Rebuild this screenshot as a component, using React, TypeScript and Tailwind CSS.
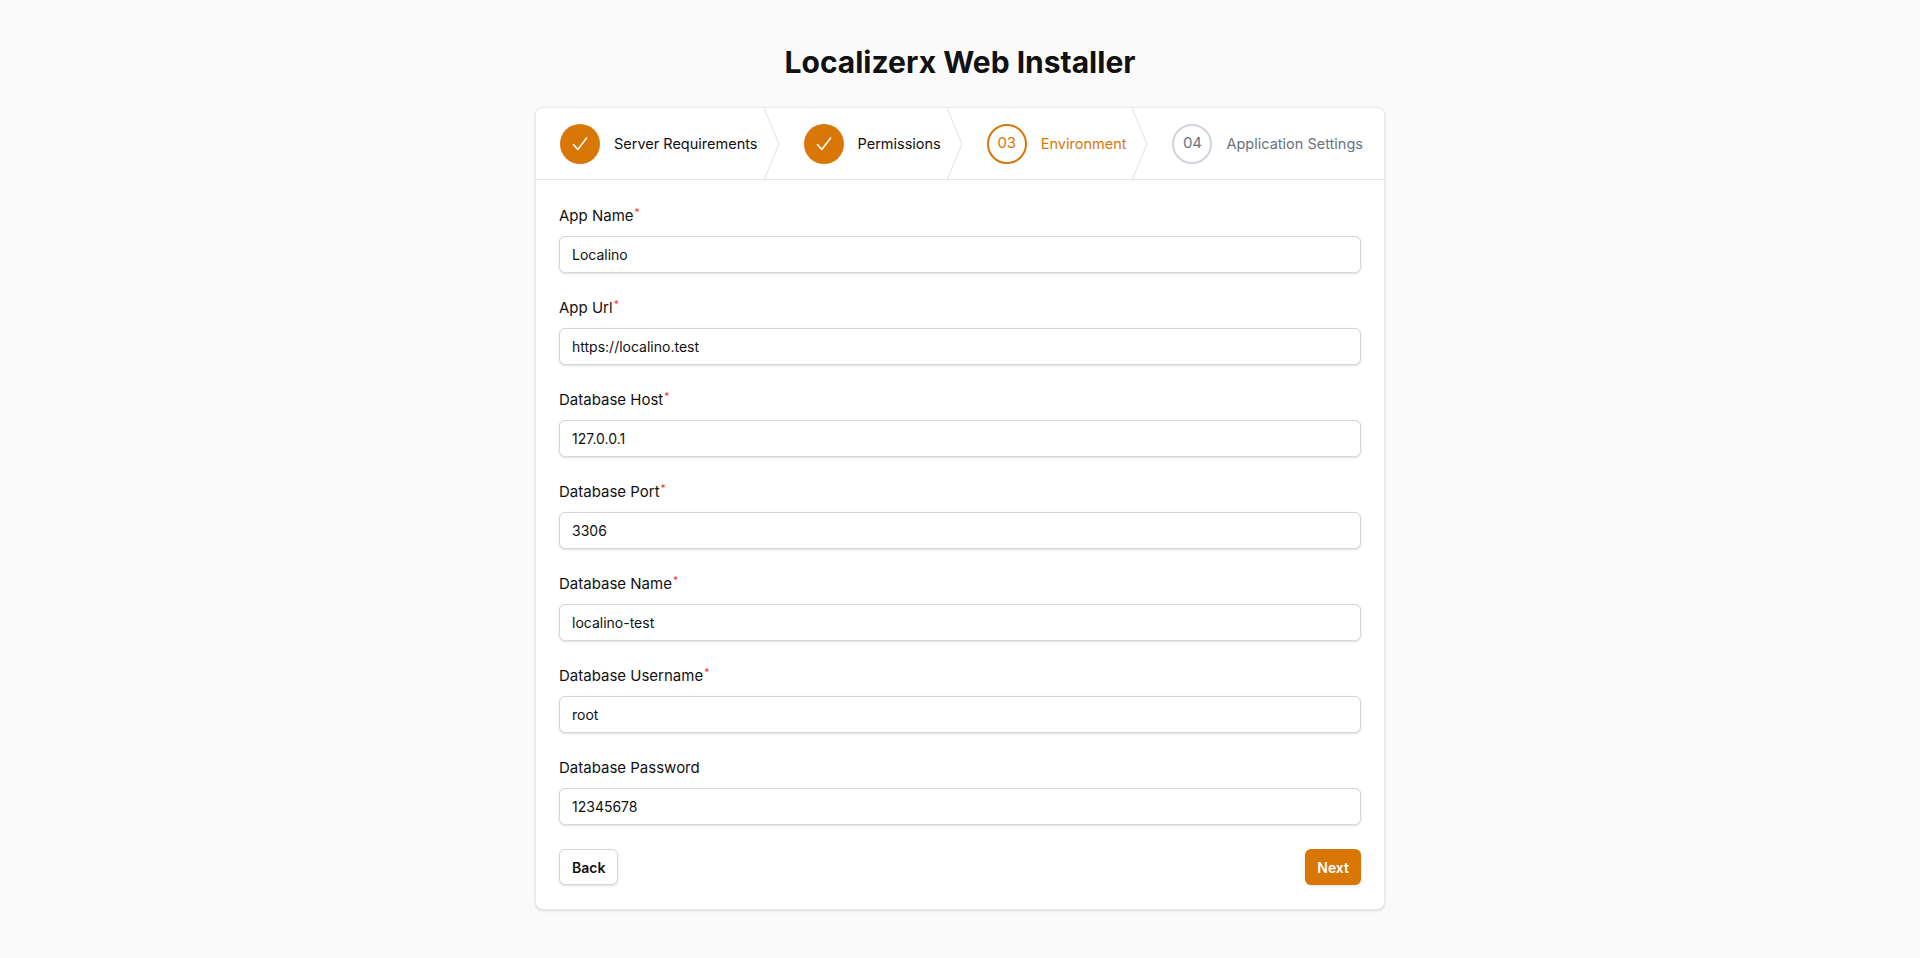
import React from "react";

const STEPS = [
  { label: "Server Requirements", state: "done", n: "01" },
  { label: "Permissions", state: "done", n: "02" },
  { label: "Environment", state: "active", n: "03" },
  { label: "Application Settings", state: "todo", n: "04" },
];

const FIELDS = [
  { label: "App Name", value: "Localino", req: true },
  { label: "App Url", value: "https://localino.test", req: true },
  { label: "Database Host", value: "127.0.0.1", req: true },
  { label: "Database Port", value: "3306", req: true },
  { label: "Database Name", value: "localino-test", req: true },
  { label: "Database Username", value: "root", req: true },
  { label: "Database Password", value: "12345678", req: false },
];

function Chevron() {
  return (
    <svg className="h-[72px] w-[16px] shrink-0" viewBox="0 0 16 72" preserveAspectRatio="none">
      <path d="M0 0 L15 36 L0 72" fill="none" stroke="#e5e7eb" strokeWidth="1.2" />
    </svg>
  );
}

export default function App() {
  return (
    <div className="min-h-[958px] bg-[#fafafa] flex flex-col items-center" style={{ fontFamily: "Inter, 'Noto Sans', sans-serif" }}>
      <h1 className="mt-[43px] text-[30px] leading-[38px] font-bold text-[#111]">Localizerx Web Installer</h1>
      <div className="mt-[26px] w-[850px] rounded-lg border border-gray-200 bg-white shadow-sm">
        <div className="flex h-[72px] items-stretch border-b border-gray-200">
          {STEPS.map((s, i) => (
            <div key={s.label} className="flex items-stretch">
              <div className={`flex items-center gap-[14px] whitespace-nowrap ${i === 0 ? "pl-[24px] pr-[6px]" : "pl-[24px] pr-[6px]"}`}>
                {s.state === "done" ? (
                  <span className="flex h-10 w-10 shrink-0 items-center justify-center rounded-full bg-[#d97706]">
                    <svg width="22" height="22" viewBox="0 0 20 20" fill="none" stroke="white" strokeWidth="1.4" strokeLinecap="round" strokeLinejoin="round">
                      <path d="M4 10.5 L8 15 L16 4.5" />
                    </svg>
                  </span>
                ) : s.state === "active" ? (
                  <span className="flex h-10 w-10 shrink-0 items-center justify-center rounded-full border-2 border-[#d97706] text-[15px] text-[#d97706]">{s.n}</span>
                ) : (
                  <span className="flex h-10 w-10 shrink-0 items-center justify-center rounded-full border-2 border-gray-300 text-[15px] text-gray-500">{s.n}</span>
                )}
                <span className={`text-[14.5px] ${s.state === "active" ? "text-[#d97706]" : s.state === "todo" ? "text-gray-500" : "text-[#111]"}`}>{s.label}</span>
              </div>
              {i < STEPS.length - 1 && <Chevron />}
            </div>
          ))}
        </div>
        <div className="px-[23px] pt-[26px] pb-[24px]">
          {FIELDS.map((f) => (
            <div key={f.label} className="mb-[25px]">
              <label className="mb-[10px] block text-[15px] leading-[20px] text-[#111]">
                {f.label}
                {f.req && <sup className="ml-[1px] text-[10px] text-red-500">*</sup>}
              </label>
              <input
                readOnly
                value={f.value}
                className="h-[37px] w-full rounded-md border border-gray-300 bg-white px-3 text-[14px] text-[#111] shadow-sm outline-none"
              />
            </div>
          ))}
          <div className="-mt-px flex justify-between">
            <button className="h-9 rounded-md border border-gray-300 bg-white px-3 text-[14px] font-semibold text-[#111] shadow-sm">Back</button>
            <button className="h-9 rounded-md bg-[#d97706] px-3 text-[14px] font-semibold text-white shadow-sm">Next</button>
          </div>
        </div>
      </div>
    </div>
  );
}
